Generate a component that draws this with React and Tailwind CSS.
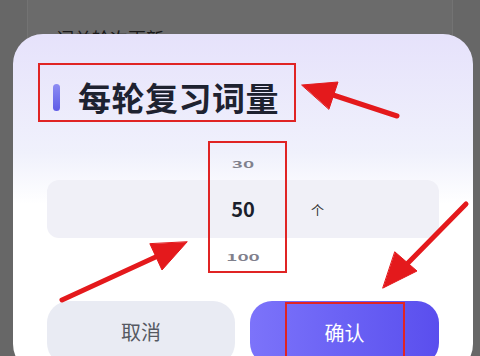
import React from "react";

const cjk = { fontFamily: '"Noto Sans CJK SC", "Noto Sans", sans-serif' };

function Arrows() {
  // red annotation arrows drawn over the screenshot
  return (
    <svg
      className="absolute inset-0 pointer-events-none"
      width="480"
      height="356"
      viewBox="0 0 480 356"
    >
      <g fill="#e4191c" stroke="#e4191c" strokeLinecap="round">
        <line x1="397" y1="116" x2="330" y2="94" strokeWidth="5" />
        <polygon points="302,85 338,82 329,109" strokeWidth="1" />
        <line x1="62" y1="300" x2="160" y2="255" strokeWidth="5" />
        <polygon points="187,242 162,270 150,244" strokeWidth="1" />
        <line x1="466" y1="204" x2="407" y2="264" strokeWidth="5" />
        <polygon points="383,288 417,271 395,252" strokeWidth="1" />
      </g>
    </svg>
  );
}

export default function App() {
  return (
    <div
      className="relative w-[480px] h-[356px] overflow-hidden bg-[#676767]"
      style={cjk}
    >
      {/* page behind the dialog */}
      <div className="mx-[27px] h-full border-x border-[#737373] bg-[#6b6b6b]">
        <div className="flex items-center justify-between pl-[28px] pr-[30px] pt-[29px]">
          <span className="text-[18px] leading-none text-[#1a1a1a]">词单轮次更新</span>
          <span className="text-[16px] leading-none text-[#2a2a2a]">›</span>
        </div>
      </div>

      {/* dialog */}
      <div className="absolute left-[13px] top-[34px] w-[460px] h-[340px] rounded-[30px] bg-linear-to-b from-[#e6e2fb] via-[#f0f1fc] via-35% to-white to-50% pt-[29px]">
        <div className="ml-[25px] w-[258px] h-[59px] border-2 border-[#e02424] flex items-center pl-[13px] pt-[9px]">
          <span className="w-[7px] h-[27px] rounded-full bg-linear-to-b from-[#8d8cf3] to-[#5f5be6]" />
          <span className="ml-[18px] text-[33px] font-bold leading-none tracking-[0.5px] text-[#1e2230]">
            每轮复习词量
          </span>
        </div>

        {/* number wheel */}
        <div className="relative mx-[34px] mt-[19px]">
          <div className="h-[39px] flex items-end justify-center pb-[6px]">
            <span className="text-[19px] font-semibold leading-none scale-y-[0.45] text-[#80808c]">30</span>
          </div>
          <div className="relative h-[58px] rounded-[12px] bg-[#f0f0f7] flex items-center justify-center">
            <span className="text-[20px] font-bold leading-none text-[#1b1f2c]">50</span>
            <span className="absolute left-[264px] text-[13px] leading-none text-[#333]">个</span>
          </div>
          <div className="h-[35px] flex items-start justify-center pt-[10px]">
            <span className="text-[19px] font-semibold leading-none scale-y-[0.45] text-[#80808c]">100</span>
          </div>
          <div className="absolute left-[161px] top-0 w-[79px] h-[132px] border-2 border-[#e02424]" />
        </div>

        {/* buttons */}
        <div className="mx-[34px] mt-[28px] flex gap-[15px]">
          <button className="w-[188px] h-[64px] rounded-[22px] bg-[#e9ebf3] text-[20px] text-[#555962] flex items-center justify-center pb-[2px]">
            取消
          </button>
          <button className="w-[189px] h-[64px] rounded-[22px] bg-linear-to-r from-[#7c73fa] to-[#5a4eee] flex justify-center pt-px">
            <span className="w-[120px] border-2 border-b-0 border-[#e02424] flex items-center justify-center text-[20px] text-white pb-[3px]">
              确认
            </span>
          </button>
        </div>
      </div>

      <Arrows />
    </div>
  );
}
